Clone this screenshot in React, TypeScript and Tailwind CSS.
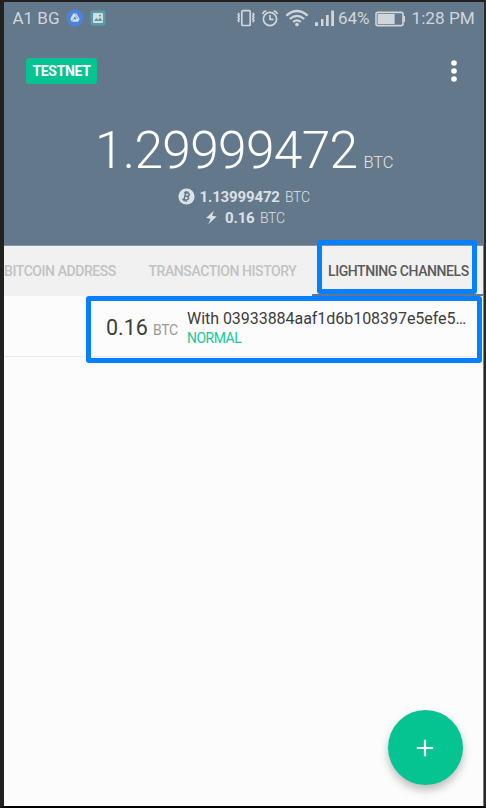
import React from "react";

function StatusBar() {
  return (
    <div className="flex h-8 items-center text-[17px] leading-8 text-[#d0d6dc]">
      <div className="flex w-[232px] shrink-0 items-center pl-[8.5px]">
        <span className="w-[53.5px] whitespace-nowrap">A1 BG</span>
        <svg width="18" height="18" viewBox="0 0 18 18">
          <circle cx="9" cy="9" r="8.4" fill="#4b83dc" />
          <path d="M7.3 4.5h3.3l3 5.4-1.5 2.8H5.9L4.3 9.9Z" fill="#d5dff0" />
          <path d="M8.9 7.2l1.6 3H7.2Z" fill="#4b83dc" />
          <path d="M9 4.6l3 5.3M7.4 10.3L6 12.8" stroke="#4b83dc" strokeWidth=".6" />
        </svg>
        <svg className="ml-[6px]" width="16" height="16" viewBox="0 0 16 16">
          <rect x=".5" y=".5" width="15" height="15" rx="2" fill="#579ca6" />
          <rect x="3" y="3" width="10" height="10" rx="1" fill="#d3dde1" />
          <path d="M4 11l2.5-3 1.7 1.7L10 7.5l2.5 3.5Z" fill="#579ca6" />
          <circle cx="10" cy="5.5" r="1" fill="#579ca6" />
        </svg>
      </div>
      <svg width="20" height="18" viewBox="0 0 20 18" fill="none" stroke="#d0d6dc">
        <rect x="5.8" y="1.7" width="8.4" height="14.8" rx="1" strokeWidth="1.7" />
        <path d="M3.2 4l-1 1.5 1 1.5-1 1.5 1 1.5-1 1.5 1 1.5M16.8 4l1 1.5-1 1.5 1 1.5-1 1.5 1 1.5-1 1.5" strokeWidth="1.7" />
      </svg>
      <svg className="ml-[5px]" width="18" height="18" viewBox="0 0 18 18" fill="none" stroke="#d0d6dc" strokeWidth="1.7">
        <circle cx="9" cy="10" r="6.6" />
        <path d="M9 6v4.4h3.5M1.5 5Q2.5 2.4 5.3 1.7M16.5 5Q15.5 2.4 12.7 1.7" />
      </svg>
      <svg className="ml-[6px]" width="24" height="18" viewBox="0 0 24 18" fill="none" stroke="#d0d6dc" strokeWidth="2.2">
        <path d="M1.3 6.7Q12-2.7 22.7 6.7M4.8 10Q12 3.7 19.2 10M8.1 13Q12 9.6 15.9 13" />
        <circle cx="12" cy="15.6" r="1.8" fill="#d0d6dc" stroke="none" />
      </svg>
      <svg className="ml-[5px]" width="21" height="18" viewBox="0 0 21 18" fill="#d0d6dc">
        <path d="M1 13.2h3V17H1ZM7 10h2.5v7H7ZM12 6h2.7v11H12ZM17.2 1.4H20V17h-2.8Z" />
      </svg>
      <span className="ml-[3px] w-[37px] text-[17px] tracking-[-0.1px] whitespace-nowrap">64%</span>
      <svg className="mt-px" width="31" height="16" viewBox="0 0 31 16">
        <rect x="1" y="1.4" width="27" height="13.2" rx="1.8" fill="none" stroke="#d0d6dc" strokeWidth="1.6" />
        <rect x="2.6" y="3" width="17" height="10" fill="#d0d6dc" />
        <path d="M29.2 5v6" stroke="#d0d6dc" strokeWidth="1.6" />
      </svg>
      <span className="ml-[5.5px] text-[17.2px] whitespace-nowrap">1:28 PM</span>
    </div>
  );
}

function Header() {
  return (
    <header className="h-[244px] border-b border-[#8797a6] bg-[#63788b]">
      <StatusBar />
      <div className="flex h-[74px] items-center justify-between pr-[26px] pl-[22px]">
        <span className="flex h-[26px] w-[71px] items-center justify-center rounded-[3px] bg-[#05c491] pt-px text-[14px] font-bold tracking-[-0.35px] text-white">
          TESTNET
        </span>
        <svg width="6" height="24" viewBox="0 0 6 24" fill="#fff">
          <circle cx="3" cy="4" r="2.8" />
          <circle cx="3" cy="12" r="2.8" />
          <circle cx="3" cy="20" r="2.8" />
        </svg>
      </div>
      <div className="flex h-[79px] items-baseline pt-[3px] pl-[91px] whitespace-nowrap text-white">
        <span className="w-[268.5px] text-[51.5px] leading-[79px] font-light tracking-[-0.7px]">1.29999472</span>
        <span className="text-[16.5px] font-light tracking-[-0.15px] text-[#e2e6ea]">BTC</span>
      </div>
      <div className="flex h-[20px] items-center pb-px pl-[174px] whitespace-nowrap text-[#dce1e6]">
        <svg width="17" height="17" viewBox="0 0 17 17">
          <circle cx="8.5" cy="8.5" r="8.1" fill="#dce1e6" />
          <g fill="none" stroke="#63788b" strokeWidth="1.5">
            <path d="M6 4.5l3.2.6q2.5.6 2.1 2-.5 1.5-2.8 1.2L6.9 8M8.5 8.3q2.6.5 2 2.3-.5 1.6-3 1.2l-3.2-.6M7.6 4.8l-1.5 6.6M8.2 3l-.4 2M10.2 3.5l-.4 1.8M6.3 11.4l-.4 2M8.3 11.8l-.4 2" />
          </g>
        </svg>
        <span className="ml-[4.5px] w-[85.5px] pt-px text-[15px] font-bold tracking-[-0.15px]">1.13999472</span>
        <span className="pt-px text-[14px] font-light tracking-[-0.3px]">BTC</span>
      </div>
      <div className="flex h-[21px] items-center pl-[202px] whitespace-nowrap text-[#dce1e6]">
        <svg width="11" height="15" viewBox="0 0 11 15" fill="#dce1e6">
          <path d="M7.8.8L.2 8.1l4.4.7L2.4 14.3 10.6 6.6 6.1 5.7Z" />
        </svg>
        <span className="ml-[8px] w-[35px] pt-px text-[15px] font-bold tracking-[-0.15px]">0.16</span>
        <span className="pt-px text-[14px] font-light tracking-[-0.3px]">BTC</span>
      </div>
    </header>
  );
}

function Tabs() {
  return (
    <nav className="flex h-[50px] bg-[#f1f1f1] text-[14px] leading-[51px] font-medium tracking-[-0.43px] whitespace-nowrap text-[#c2c2c2]">
      <span className="w-[144.5px]">BITCOIN ADDRESS</span>
      <span className="w-[163.5px]">TRANSACTION HISTORY</span>
      <div className="relative flex-1 border-b-2 border-[#63788b] pl-[16px] text-[#5a5a5a]">
        LIGHTNING CHANNELS
        <span className="absolute top-[-6px] left-[5px] h-[54px] w-[160px] rounded-[3px] border-[5px] border-[#0780ff]" />
      </div>
    </nav>
  );
}

function ChannelRow() {
  return (
    <div className="relative flex h-[61px] border-b border-[#ececec] whitespace-nowrap">
      <div className="flex h-[60px] w-[183px] items-baseline pl-[102px]">
        <span className="w-[47px] text-[21.5px] leading-[63px] text-[#3d3d3d]">0.16</span>
        <span className="text-[14px] tracking-[-0.4px] text-[#999]">BTC</span>
      </div>
      <div className="pt-[12px]">
        <div className="text-[16px] leading-[22px] tracking-[-0.04px] text-[#3d3d3d]">With 03933884aaf1d6b108397e5efe5…</div>
        <div className="text-[14px] leading-[17px] tracking-[-0.5px] text-[#16c997]">NORMAL</div>
      </div>
      <span className="absolute top-0 left-[82px] h-[67px] w-[396px] rounded-[3px] border-[5px] border-[#0780ff]" />
    </div>
  );
}

export default function App() {
  return (
    <div className="flex h-[808px] w-[486px] flex-col overflow-hidden border-t-2 border-r-2 border-b-2 border-l-4 border-t-[#222120] border-r-[#292929] border-b-black border-l-[#222120] font-[Roboto,sans-serif]">
      <div className="flex flex-1 flex-col border-r border-[#777b7f] bg-[#fcfcfc]">
        <Header />
        <Tabs />
        <ChannelRow />
        <div className="flex flex-1 items-end justify-end pr-[20.5px] pb-[21px]">
          <button className="flex size-[75px] items-center justify-center rounded-full bg-[#05c491] shadow-[0_5px_9px_rgba(0,0,0,0.25)]">
            <svg width="18" height="18" viewBox="0 0 18 18">
              <path d="M9 .8v16.4M.8 9h16.4" stroke="#fff" strokeWidth="2.2" />
            </svg>
          </button>
        </div>
      </div>
    </div>
  );
}
